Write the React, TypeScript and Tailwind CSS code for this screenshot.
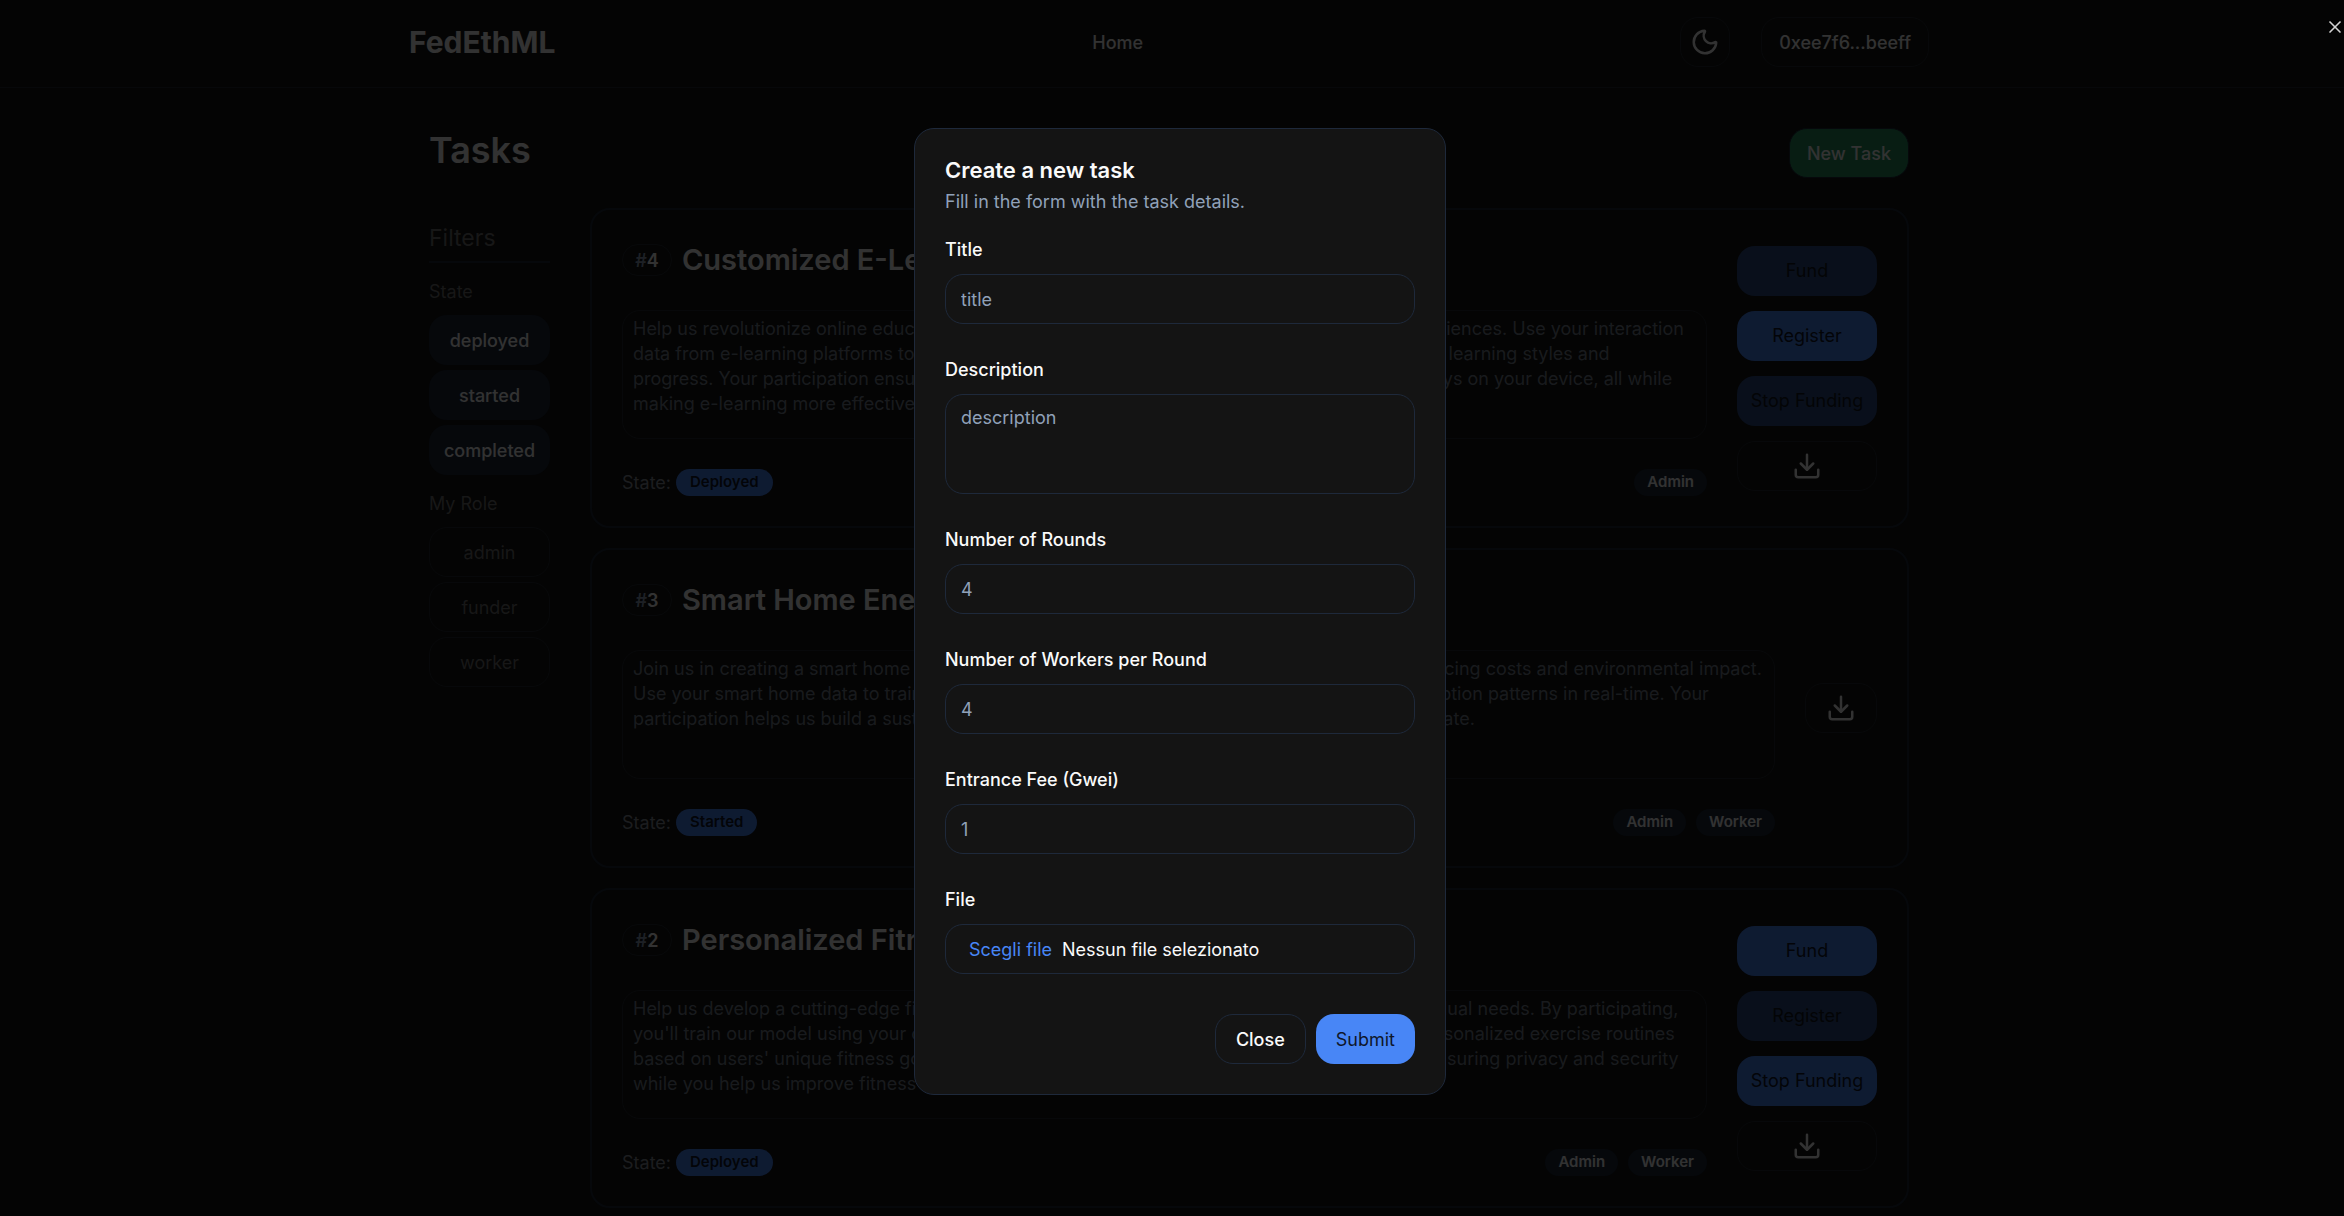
import React from "react";
import { Download, Moon, X } from "lucide-react";

type TaskState = "Deployed" | "Started";

interface Action {
  label: string;
  disabled?: boolean;
}

interface Task {
  id: number;
  title: string;
  lines: string[];
  state: TaskState;
  roles: string[];
  actions: Action[];
}

const TASKS: Task[] = [
  {
    id: 4,
    title: "Customized E-Learning",
    lines: [
      "Help us revolutionize online education by training our model to give personalized learning experiences. Use your interaction",
      "data from e-learning platforms to train a new model that adapts the course content to individual learning styles and",
      "progress. Your participation ensures a more engaging experience while all your private data stays on your device, all while",
      "making e-learning more effective for all.",
    ],
    state: "Deployed",
    roles: ["Admin"],
    actions: [
      { label: "Fund", disabled: true },
      { label: "Register" },
      { label: "Stop Funding", disabled: true },
    ],
  },
  {
    id: 3,
    title: "Smart Home Energy",
    lines: [
      "Join us in creating a smart home energy model that optimizes your daily household usage, reducing costs and environmental impact.",
      "Use your smart home data to train a model that predicts and adjusts household energy consumption patterns in real-time. Your",
      "participation helps us build a sustainable energy future while keeping all of your home data private.",
    ],
    state: "Started",
    roles: ["Admin", "Worker"],
    actions: [],
  },
  {
    id: 2,
    title: "Personalized Fitness",
    lines: [
      "Help us develop a cutting-edge fitness model that tailors every workout and meal plan to individual needs. By participating,",
      "you'll train our model using your own wearable sensor data, helping us recommend smarter personalized exercise routines",
      "based on users' unique fitness goals. Your own sensitive data never leaves your own device, ensuring privacy and security",
      "while you help us improve fitness everywhere.",
    ],
    state: "Deployed",
    roles: ["Admin", "Worker"],
    actions: [
      { label: "Fund" },
      { label: "Register", disabled: true },
      { label: "Stop Funding" },
    ],
  },
];

function Badge({ primary, children }: { primary?: boolean; children: React.ReactNode }) {
  return (
    <span
      className={
        primary
          ? "flex h-[27px] items-center rounded-full bg-[#4886f6] px-[14px] text-[15px] font-semibold text-[#0f172a]"
          : "flex h-[27px] items-center rounded-full bg-[#1e293b] px-[13px] text-[15px] font-semibold text-neutral-50"
      }
    >
      {children}
    </span>
  );
}

function FilterGroup({ label, items, active }: { label: string; items: string[]; active?: boolean }) {
  return (
    <section className="mt-4 flex flex-col">
      <h3 className="text-[18px] leading-[25px] text-neutral-500">{label}</h3>
      <div className="mt-[11px] flex flex-col gap-[5px]">
        {items.map((item) => (
          <button
            key={item}
            type="button"
            className={
              active
                ? "h-[50px] rounded-[18px] bg-[#1e293b] text-[18px] font-medium text-neutral-50"
                : "h-[50px] rounded-[18px] border border-[#262b33] text-[18px] text-neutral-500"
            }
          >
            {item}
          </button>
        ))}
      </div>
    </section>
  );
}

function TaskCard({ task }: { task: Task }) {
  return (
    <article className="flex items-center gap-[30px] rounded-[20px] border-2 border-[#1e293b] p-[30px]">
      <div className="flex min-w-0 flex-1 flex-col gap-[30px]">
        <div className="flex h-10 items-center gap-[10px]">
          <span className="flex h-8 w-[50px] items-center justify-center rounded-full border border-[#262b33] text-[18px] font-semibold text-neutral-50">
            <span className="text-slate-400">#</span>
            {task.id}
          </span>
          <h2 className="text-[29px] leading-10 font-semibold whitespace-nowrap text-neutral-50">{task.title}</h2>
        </div>
        <p className="h-[129px] overflow-hidden rounded-[18px] border border-[#262b33] px-[10px] py-[5px] text-[18px] leading-[25px] whitespace-nowrap text-[#7b8492]">
          {task.lines.map((line) => (
            <span key={line} className="block">
              {line}
            </span>
          ))}
        </p>
        <div className="flex h-[27px] items-center justify-between">
          <div className="flex items-center gap-[5px] text-[18px] text-[#8b919c]">
            State: <Badge primary>{task.state}</Badge>
          </div>
          <div className="flex gap-[10px]">
            {task.roles.map((role) => (
              <Badge key={role}>{role}</Badge>
            ))}
          </div>
        </div>
      </div>
      <div className="flex flex-col gap-[15px]">
        {task.actions.map((action) => (
          <button
            key={action.label}
            type="button"
            disabled={action.disabled}
            className="h-[50px] w-[140px] rounded-[18px] bg-[#4886f6] text-[18px] whitespace-nowrap text-[#0f172a] disabled:opacity-50"
          >
            {action.label}
          </button>
        ))}
        <button
          type="button"
          aria-label={"Download task " + task.id}
          className="flex h-[50px] items-center justify-center rounded-[18px] border border-[#262b33] px-5 text-neutral-50"
        >
          <Download size={30} />
        </button>
      </div>
    </article>
  );
}

const FIELD = "h-[50px] w-full rounded-[18px] border border-[#1e293b] bg-transparent px-[15px] text-[18px] text-neutral-50 placeholder:text-slate-400 placeholder:opacity-100";

function Field({ id, label, children }: { id: string; label: string; children: React.ReactNode }) {
  return (
    <div className="flex flex-col gap-[14px]">
      <label htmlFor={id} className="text-[18px] leading-5 font-medium text-neutral-50">
        {label}
      </label>
      {children}
    </div>
  );
}

function CreateTaskDialog() {
  return (
    <div
      role="dialog"
      aria-modal="true"
      aria-labelledby="dialog-title"
      className="w-[532px] rounded-[20px] border border-[#1e293b] bg-[#141414] p-[30px]"
    >
      <h2 id="dialog-title" className="text-[22px] leading-[22px] font-semibold text-neutral-50">
        Create a new task
      </h2>
      <p className="mt-2 text-[18px] leading-[25px] text-slate-400">Fill in the form with the task details.</p>
      <form className="mt-[26px] flex flex-col gap-9" onSubmit={(e) => e.preventDefault()}>
        <Field id="title" label="Title">
          <input id="title" type="text" placeholder="title" className={FIELD} />
        </Field>
        <Field id="description" label="Description">
          <textarea
            id="description"
            placeholder="description"
            className="block h-[100px] w-full resize-none rounded-[18px] border border-[#1e293b] bg-transparent px-[15px] py-[10px] text-[18px] leading-[25px] text-neutral-50 placeholder:text-slate-400"
          />
        </Field>
        <Field id="rounds" label="Number of Rounds">
          <input id="rounds" inputMode="numeric" placeholder="4" className={FIELD} />
        </Field>
        <Field id="workers" label="Number of Workers per Round">
          <input id="workers" inputMode="numeric" placeholder="4" className={FIELD} />
        </Field>
        <Field id="fee" label="Entrance Fee (Gwei)">
          <input id="fee" inputMode="numeric" placeholder="1" className={FIELD} />
        </Field>
        <Field id="file" label="File">
          <label
            htmlFor="file"
            className="flex h-[50px] items-center gap-[10px] rounded-[18px] border border-[#1e293b] px-[23px] text-[18px] text-neutral-50"
          >
            <input id="file" type="file" className="sr-only" />
            <span className="text-[#4886f6]">Scegli file</span>
            <span>Nessun file selezionato</span>
          </label>
        </Field>
        <div className="mt-1 flex justify-end gap-[10px]">
          <button
            type="button"
            className="h-[50px] rounded-[18px] border border-[#1e293b] px-5 text-[18px] font-medium text-neutral-50"
          >
            Close
          </button>
          <button type="submit" className="h-[50px] rounded-[18px] bg-[#4886f6] px-5 text-[18px] text-[#0f172a]">
            Submit
          </button>
        </div>
      </form>
    </div>
  );
}

export default function App() {
  return (
    <div className="h-screen overflow-hidden bg-[#141414] font-['Inter',sans-serif] text-neutral-50 antialiased">
      <header className="border-b border-[#262b33] pt-[17px] pr-[6px] pb-5">
        <div className="mx-auto flex max-w-[1520px] items-center justify-between">
          <a href="#" className="text-[30px] font-bold">
            FedEthML
          </a>
          <nav>
            <a href="#" className="text-[18px] font-medium">
              Home
            </a>
          </nav>
          <div className="flex items-center gap-[31px]">
            <button
              type="button"
              aria-label="Toggle theme"
              className="flex size-[50px] items-center justify-center rounded-[18px] border border-[#262b33]"
            >
              <Moon size={30} />
            </button>
            <button
              type="button"
              className="h-[50px] rounded-[18px] border border-[#262b33] px-[17px] text-[18px] font-medium"
            >
              0xee7f6...beeff
            </button>
          </div>
        </div>
      </header>

      <div className="pr-[6px]">
        <main className="mx-auto max-w-[1480px] pt-10">
          <div className="flex items-start justify-between">
            <h1 className="text-[36px] leading-[45px] font-semibold">Tasks</h1>
            <button
              type="button"
              className="h-[50px] rounded-[18px] border border-[#1e293b] bg-[#28915f] px-[17px] text-[18px] font-medium"
            >
              New Task
            </button>
          </div>
          <div className="mt-[30px] flex items-start gap-10">
            <aside className="w-[121px] shrink-0 pt-[13px]">
              <h2 className="border-b-2 border-[#1e293b] pb-[5px] text-[23px] leading-[35px] text-neutral-500">
                Filters
              </h2>
              <FilterGroup label="State" items={["deployed", "started", "completed"]} active />
              <FilterGroup label="My Role" items={["admin", "funder", "worker"]} />
            </aside>
            <div className="flex min-w-0 flex-1 flex-col gap-5">
              {TASKS.map((task) => (
                <TaskCard key={task.id} task={task} />
              ))}
            </div>
          </div>
        </main>
      </div>

      <div className="fixed inset-y-0 -right-4 left-0 flex items-start justify-center bg-black/80 pt-32">
        <CreateTaskDialog />
        <button type="button" aria-label="Close dialog" className="absolute top-[17px] right-[15px] text-neutral-300">
          <X size={20} />
        </button>
      </div>
    </div>
  );
}
